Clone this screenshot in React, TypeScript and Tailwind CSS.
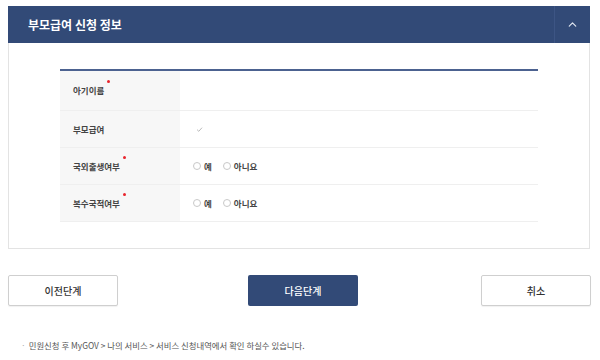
import { ChevronUp } from 'lucide-react'

const font = { fontFamily: '"Noto Sans CJK KR", "Noto Sans", sans-serif' }

function Radio({ label }: { label: string }) {
  return (
    <label className="flex items-center gap-[3px]">
      <span className="w-[8px] h-[8px] rounded-full border border-[#c8c8c8] bg-white" />
      <span className="text-[8.5px] font-bold text-[#444]">{label}</span>
    </label>
  )
}

function Row({ label, required, children, first }: { label: string; required?: boolean; children?: React.ReactNode; first?: boolean }) {
  return (
    <div className={`flex ${first ? 'h-[39px]' : 'h-[37px] border-t border-[#efefef]'}`}>
      <div className="w-[120px] bg-[#f7f7f7] flex items-center pl-[13px]">
        <span className="relative text-[8.5px] font-bold text-[#444]">
          {label}
          {required && <span className="absolute -right-[6px] -top-[4px] w-[3px] h-[3px] rounded-full bg-[#e8242c]" />}
        </span>
      </div>
      <div className="flex-1 flex items-center pl-[13px] gap-[11px]">{children}</div>
    </div>
  )
}

export default function App() {
  return (
    <div className="w-[600px] h-[360px] bg-white relative" style={font}>
      <div className="pt-[6px] px-[8px] mr-[2px]">
        <div className="border border-[#e3e3e3]">
          {/* Header */}
          <div className="h-[37px] bg-[#324a77] flex items-center -mx-px -mt-px">
            <h2 className="flex-1 pl-[20px] text-[12px] font-bold text-white">부모급여 신청 정보</h2>
            <div className="w-[36px] h-full border-l border-[#3d5584] flex items-center justify-center">
              <ChevronUp size={13} strokeWidth={2.2} className="text-[#dfe5ef]" />
            </div>
          </div>

          {/* Table */}
          <div className="px-[51px] pt-[26px] pb-[26px]">
            <div className="border-t-2 border-[#4c6290] border-b border-b-[#efefef]">
              <Row label="아기이름" required first />
              <Row label="부모급여">
                <span className="ml-[2px] w-[8px] h-[8px] flex items-center justify-center">
                  <svg width="7" height="7" viewBox="0 0 10 10" fill="none" stroke="#b8b8b8" strokeWidth="1.4">
                    <path d="M1.5 5.2 L4 7.6 L8.6 2.4" />
                  </svg>
                </span>
              </Row>
              <Row label="국외출생여부" required>
                <Radio label="예" />
                <Radio label="아니요" />
              </Row>
              <Row label="복수국적여부" required>
                <Radio label="예" />
                <Radio label="아니요" />
              </Row>
            </div>
          </div>
        </div>
      </div>

      {/* Buttons */}
      <div className="flex items-center pl-[8px] mt-[26px]">
        <button className="w-[110px] h-[31px] border border-[#cfcfcf] rounded-[2px] bg-white text-[10px] font-medium text-[#333] shadow-[0_1px_1px_rgba(0,0,0,0.06)]">
          이전단계
        </button>
        <button className="ml-[130px] w-[110px] h-[31px] rounded-[2px] bg-[#324a77] text-[10px] font-medium text-white">
          다음단계
        </button>
        <button className="ml-[123px] w-[110px] h-[31px] border border-[#cfcfcf] rounded-[2px] bg-white text-[10px] font-medium text-[#333] shadow-[0_1px_1px_rgba(0,0,0,0.06)]">
          취소
        </button>
      </div>

      {/* Note */}
      <p className="mt-[33px] pl-[21px] text-[8.4px] text-[#555]">
        <span className="text-[#aaa] mr-[3px]">·</span>민원신청 후 MyGOV &gt; 나의 서비스 &gt; 서비스 신청내역에서 확인 하실수 있습니다.
      </p>
    </div>
  )
}
